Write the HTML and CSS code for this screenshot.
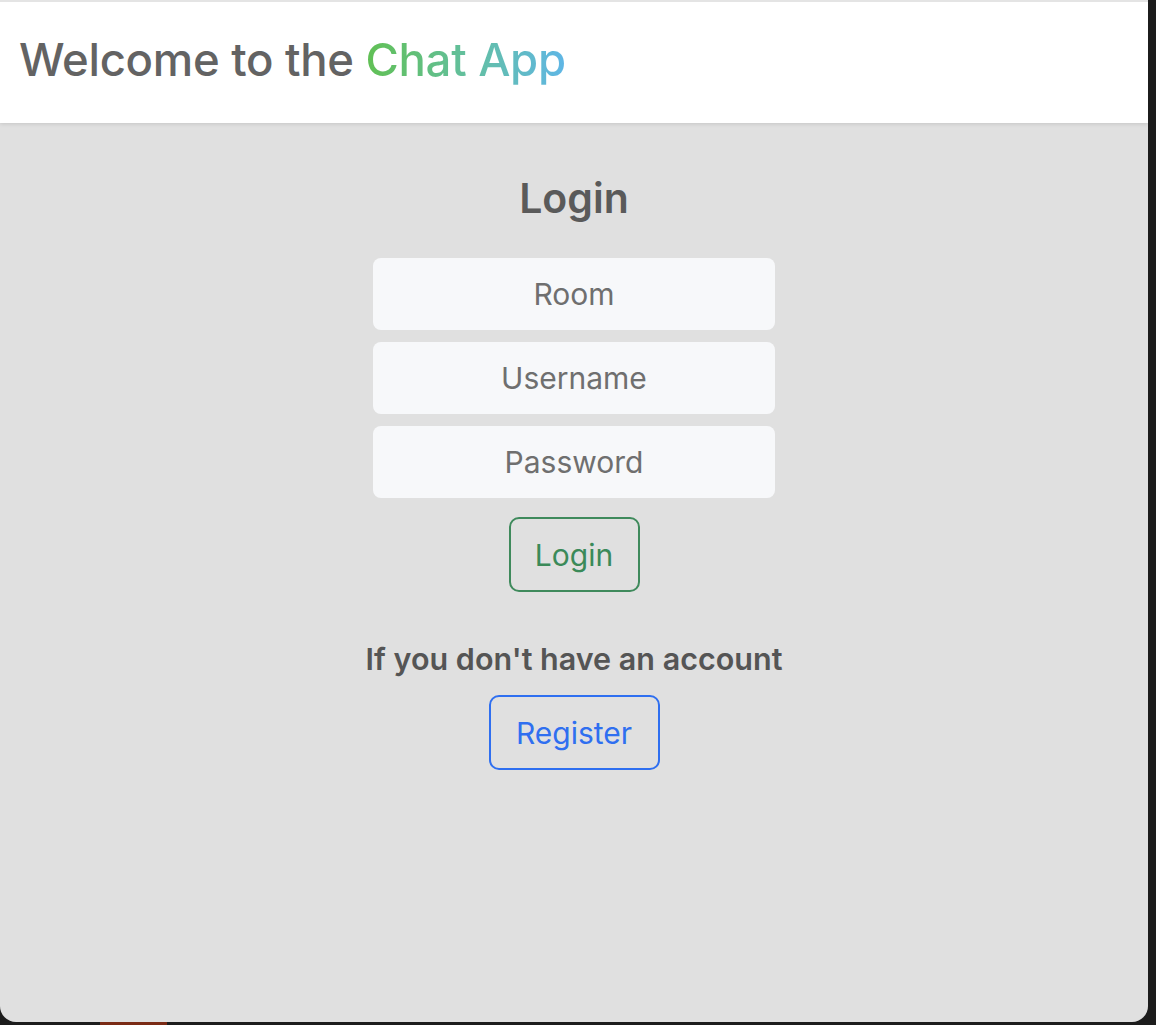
FILE: index.html
```html
<!DOCTYPE html>
<html lang="en">
<head>
<meta charset="utf-8">
<title>Chat App</title>
<link rel="stylesheet" href="styles.css">
</head>
<body>
<div class="desktop">
  <div class="window">
    <header class="topbar">
      <h1 class="brand">Welcome to the <span class="grad">Chat App</span></h1>
    </header>
    <main class="content">
      <h2 class="title">Login</h2>
      <form class="form">
        <input class="field" type="text" placeholder="Room">
        <input class="field" type="text" placeholder="Username">
        <input class="field" type="password" placeholder="Password">
        <button class="btn btn-green" type="button">Login</button>
      </form>
      <p class="note">If you don't have an account</p>
      <button class="btn btn-blue" type="button">Register</button>
    </main>
  </div>
  <div class="dock"><span class="dock-item"></span></div>
</div>
</body>
</html>
```
FILE: styles.css
```css
html, body {
  margin: 0;
  padding: 0;
  background: #1c1c1c;
}
body {
  width: 1156px;
  height: 1025px;
  overflow: hidden;
  font-family: Inter, "Noto Sans", "Liberation Sans", sans-serif;
}
.desktop {
  display: flex;
  flex-direction: column;
}
.window {
  width: 1148px;
  height: 1022px;
  background: #e0e0e0;
  border-bottom-left-radius: 16px;
  border-bottom-right-radius: 16px;
  border-top: 2px solid #e4e4e4;
  box-sizing: border-box;
  overflow: hidden;
  display: flex;
  flex-direction: column;
}
.topbar {
  background: #ffffff;
  height: 121px;
  box-sizing: border-box;
  flex: none;
  display: flex;
  align-items: center;
  padding-left: 19px;
  padding-bottom: 6px;
  box-shadow: 0 1px 4px rgba(0,0,0,0.12);
  position: relative;
  z-index: 1;
}
.brand {
  margin: 0;
  font-size: 45.5px;
  font-weight: 500;
  color: #636363;
  letter-spacing: -0.3px;
}
.grad {
  background: linear-gradient(90deg, #61c053 0%, #63bfa5 55%, #5fb6e6 100%);
  -webkit-background-clip: text;
  background-clip: text;
  color: transparent;
}
.content {
  display: flex;
  flex-direction: column;
  align-items: center;
  padding-top: 50px;
}
.title {
  margin: 0 0 35px 0;
  font-size: 41px;
  font-weight: 600;
  color: #5a5a5a;
  line-height: 50px;
}
.form {
  display: flex;
  flex-direction: column;
  align-items: center;
  gap: 12px;
}
.field {
  width: 402px;
  height: 72px;
  box-sizing: border-box;
  border: none;
  border-radius: 8px;
  background: #f7f8fa;
  font-family: inherit;
  font-size: 30px;
  text-align: center;
  color: #6f6f6f;
  outline: none;
}
.field::placeholder {
  color: #6f6f6f;
  opacity: 1;
}
.btn {
  background: transparent;
  font-family: inherit;
  font-size: 30px;
  height: 75px;
  border-radius: 10px;
  box-sizing: border-box;
  padding: 0 20px;
  cursor: pointer;
}
.btn-green {
  margin-top: 7px;
  width: 131px;
  border: 2px solid #3f8a5c;
  color: #3b8a59;
}
.btn-blue {
  width: 171px;
  border: 2px solid #2f6ff0;
  color: #2f6ff0;
}
.note {
  margin: 47px 0 16px 0;
  font-size: 30.5px;
  font-weight: 600;
  color: #555555;
  line-height: 40px;
}
.dock {
  height: 3px;
  display: flex;
  padding-left: 100px;
}
.dock-item {
  width: 67px;
  height: 3px;
  background: #7a2a15;
}
```
